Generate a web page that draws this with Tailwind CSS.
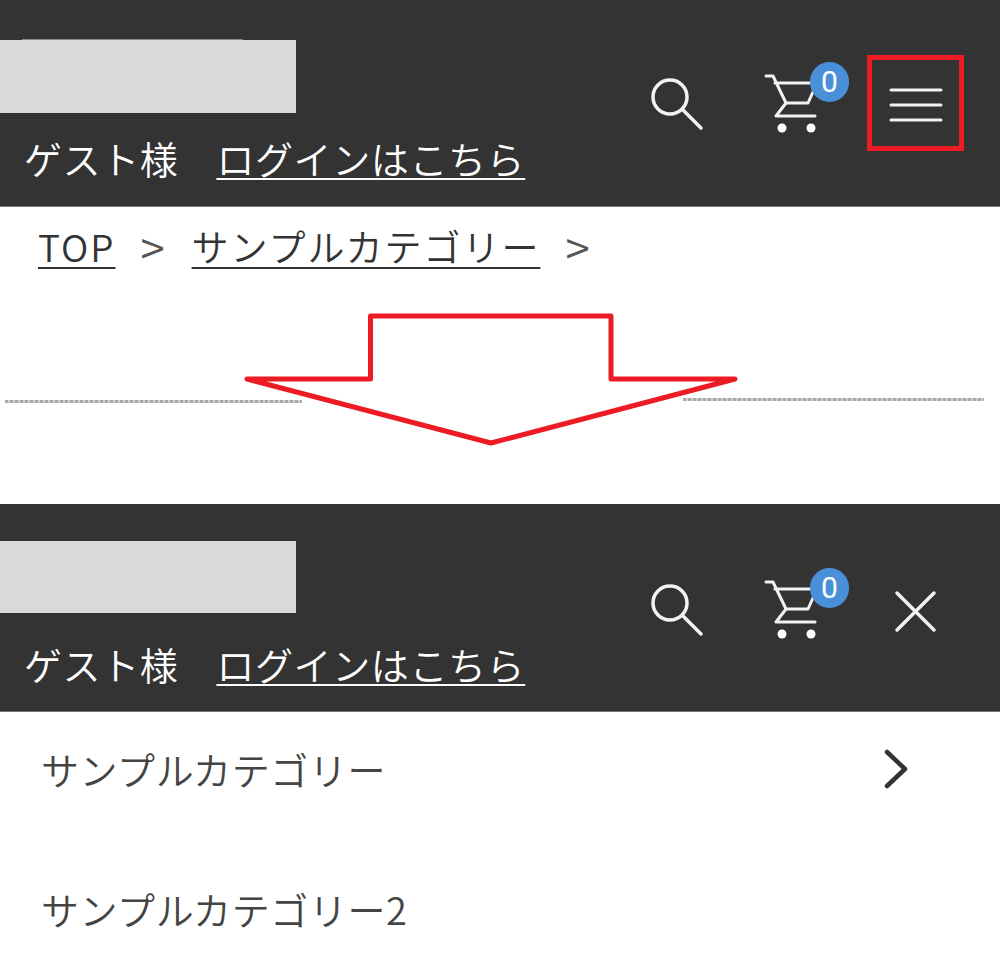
<!DOCTYPE html>
<html lang="ja">
<head>
<meta charset="utf-8">
<script src="https://cdn.jsdelivr.net/npm/@tailwindcss/browser@4"></script>
<title>Menu</title>
</head>
<body class="bg-white font-['Noto_Sans_CJK_JP','Noto_Sans',sans-serif] font-[350]">
<div class="relative w-[1000px] h-[977px] overflow-hidden">

  <header class="relative h-[207px] bg-[#333333] flex justify-between border-b border-[#777]">
    <div class="flex flex-col">
      <div class="h-px w-[221px] ml-[22px] mt-[39px] bg-[#888]"></div>
      <div class="w-[296px] h-[73px] bg-[#d9d9d9]"></div>
      <p class="mt-[17px] flex text-[38px] leading-[56px] text-white tracking-[0.6px] whitespace-nowrap">
        <span class="ml-[24px]">ゲスト様</span>
        <a class="ml-[38px] underline underline-offset-[4px] decoration-2">ログインはこちら</a>
      </p>
    </div>
    <div class="flex items-start pt-[60px] pr-[50px]">
      <svg class="mt-[10px]" width="56" height="64" viewBox="648 70 56 64" fill="none" stroke="#f2f2f2" stroke-width="3.5" stroke-linecap="round"><circle cx="670" cy="97" r="17"/><path d="M683 110 L701 128"/></svg>
      <div class="relative ml-[56px] w-[90px] h-[80px]">
        <svg width="60" height="80" viewBox="760 60 60 80" fill="none" stroke="#f2f2f2" stroke-width="3" stroke-linecap="round" stroke-linejoin="round"><path d="M766 76 H773 L786 103 H808 L817 83 H775"/><path d="M786 103 L776 116 H815"/><circle cx="782" cy="128" r="4.5" fill="#fff" stroke="none"/><circle cx="811" cy="128" r="4.5" fill="#fff" stroke="none"/></svg>
        <span class="absolute left-[50px] top-[2px] w-[39px] h-[40px] rounded-full bg-[#4a90d9] text-white text-[30px] leading-[40px] text-center font-['Roboto',sans-serif] font-normal">0</span>
      </div>
      <svg class="ml-[30px] mt-[25px]" width="70" height="40" viewBox="880 85 70 40" fill="none" stroke="#f2f2f2" stroke-width="3" stroke-linecap="round"><path d="M891 90 H941 M891 105 H941 M891 120 H941"/></svg>
    </div>
    <div class="absolute left-[867px] top-[55px] w-[97px] h-[96px] border-[5px] border-[#ed1c24]"></div>
  </header>

  <section class="relative h-[297px] bg-white">
    <nav class="flex items-center h-[84px] pb-[6px] pl-[38px] text-[37px] text-[#333] leading-none whitespace-nowrap">
      <a class="tracking-[2px] underline underline-offset-[5px] decoration-2">TOP</a>
      <span class="ml-[25px] text-[44px] text-[#555]">&gt;</span>
      <a class="ml-[27px] tracking-[2px] underline underline-offset-[5px] decoration-2">サンプルカテゴリー</a>
      <span class="ml-[25px] text-[44px] text-[#555]">&gt;</span>
    </nav>
    <div class="flex justify-between items-start mt-[107px] pl-[5px] pr-[16px]">
      <div class="w-[297px] h-[3px] mt-[2px] bg-[repeating-linear-gradient(90deg,#a8a8a8_0,#a8a8a8_3px,#cfcfcf_3px,#cfcfcf_5px)]"></div>
      <div class="w-[301px] h-[3px] bg-[repeating-linear-gradient(90deg,#a8a8a8_0,#a8a8a8_3px,#cfcfcf_3px,#cfcfcf_5px)]"></div>
    </div>
    <svg class="absolute left-[240px] top-[103px]" width="504" height="140" viewBox="240 310 504 140" fill="#fff" stroke="#ed1c24" stroke-width="5" stroke-linejoin="round"><path d="M370.500 316 H611 V379 H735 L491 443 L247 379 H370.500 Z"/></svg>
  </section>

  <header class="relative h-[208px] bg-[#333333] flex justify-between border-b border-[#777]">
    <div class="flex flex-col">
      <div class="w-[296px] h-[72px] mt-[37px] bg-[#d9d9d9]"></div>
      <p class="mt-[23px] flex text-[38px] leading-[56px] text-white tracking-[0.6px] whitespace-nowrap">
        <span class="ml-[24px]">ゲスト様</span>
        <a class="ml-[38px] underline underline-offset-[4px] decoration-2">ログインはこちら</a>
      </p>
    </div>
    <div class="flex items-start pt-[62px] pr-[50px]">
      <svg class="mt-[10px]" width="56" height="64" viewBox="648 70 56 64" fill="none" stroke="#f2f2f2" stroke-width="3.5" stroke-linecap="round"><circle cx="670" cy="97" r="17"/><path d="M683 110 L701 128"/></svg>
      <div class="relative ml-[56px] w-[90px] h-[80px]">
        <svg width="60" height="80" viewBox="760 60 60 80" fill="none" stroke="#f2f2f2" stroke-width="3" stroke-linecap="round" stroke-linejoin="round"><path d="M766 76 H773 L786 103 H808 L817 83 H775"/><path d="M786 103 L776 116 H815"/><circle cx="782" cy="128" r="4.5" fill="#fff" stroke="none"/><circle cx="811" cy="128" r="4.5" fill="#fff" stroke="none"/></svg>
        <span class="absolute left-[50px] top-[2px] w-[39px] h-[40px] rounded-full bg-[#4a90d9] text-white text-[30px] leading-[40px] text-center font-['Roboto',sans-serif] font-normal">0</span>
      </div>
      <svg class="ml-[30px] mt-[20px]" width="70" height="50" viewBox="880 585 70 50" fill="none" stroke="#f2f2f2" stroke-width="3.5" stroke-linecap="round"><path d="M897 592 L934 629 M934 592 L897 629"/></svg>
    </div>
  </header>

  <ul class="bg-white text-[38px] text-[#444] leading-[56px] whitespace-nowrap">
    <li class="flex items-center justify-between h-[114px] pl-[41px] pr-[92px] tracking-[0.6px]">
      <span>サンプルカテゴリー</span>
      <svg width="24" height="40" viewBox="0 0 24 40" fill="none" stroke="#333" stroke-width="4.5" stroke-linecap="round" stroke-linejoin="round"><path d="M3 3 L21 20 L3 37"/></svg>
    </li>
    <li class="flex items-center h-[166px] pl-[41px] tracking-[0.6px]"><span>サンプルカテゴリー2</span></li>
  </ul>
</div>
</body>
</html>
